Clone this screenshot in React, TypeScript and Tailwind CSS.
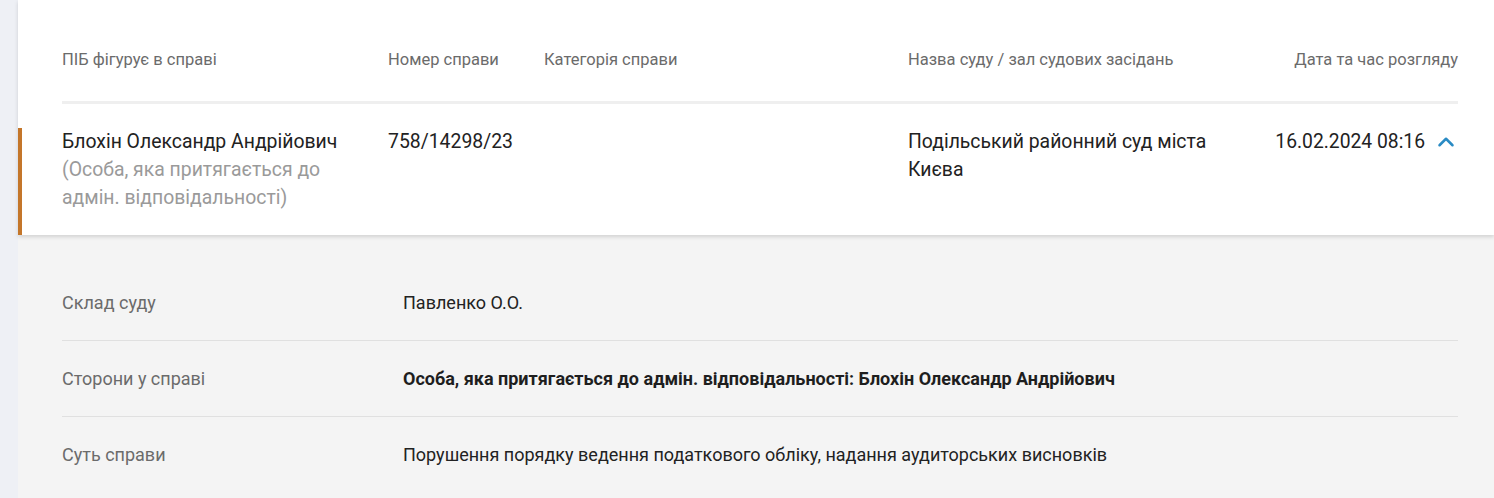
import { ChevronUp } from "lucide-react";

const columns = [
	{ label: "ПІБ фігурує в справі", className: "w-[326px]" },
	{ label: "Номер справи", className: "w-[156px]" },
	{ label: "Категорія справи", className: "w-[364px]" },
	{ label: "Назва суду / зал судових засідань", className: "flex-1" },
];

const details = [
	{ label: "Склад суду", value: "Павленко О.О.", bold: false },
	{
		label: "Сторони у справі",
		value: "Особа, яка притягається до адмін. відповідальності: Блохін Олександр Андрійович",
		bold: true,
	},
	{
		label: "Суть справи",
		value: "Порушення порядку ведення податкового обліку, надання аудиторських висновків",
		bold: false,
	},
];

export default function App() {
	return (
		<div className="flex min-h-[498px] w-full bg-[#eef0f5] font-['Roboto',sans-serif]">
			<div className="w-[18px] shrink-0" />
			<main className="flex flex-1 flex-col bg-[#f4f4f4]">
				<section className="relative z-10 bg-white shadow-[0_2px_4px_rgba(0,0,0,0.14)]">
					<div className="pl-[44px] pr-[36px]">
						<div className="flex items-center pt-[50px] pb-[31px] text-[16.5px] leading-5 text-[#6b6b6b]">
							{columns.map((col) => (
								<div key={col.label} className={col.className}>
									{col.label}
								</div>
							))}
							<div className="text-right">Дата та час розгляду</div>
						</div>
						<div className="h-[3px] bg-[#efefef]" />
					</div>
					<div className="mt-[24px] flex border-l-4 border-[#c4762a] pb-[23px] pl-[40px] pr-[35px] text-[19.4px] leading-[28px] text-[#222]">
						<div className="w-[326px]">
							<div>Блохін Олександр Андрійович</div>
							<div className="max-w-[290px] text-[#9a9a9a]">
								(Особа, яка притягається до адмін. відповідальності)
							</div>
						</div>
						<div className="w-[156px]">758/14298/23</div>
						<div className="w-[364px]" />
						<div className="flex-1">
							<div className="max-w-[320px]">Подільський районний суд міста Києва</div>
						</div>
						<div className="flex items-start gap-[8px]">
							<span className="text-[19.3px]">16.02.2024 08:16</span>
							<ChevronUp className="mt-[1px] h-[26px] w-[26px] text-[#2a8bc4]" strokeWidth={2.3} />
						</div>
					</div>
				</section>
				<section className="pt-[29px] pl-[44px] pr-[36px]">
					{details.map((row, i) => (
						<div
							key={row.label}
							className={`flex h-[76px] items-center text-[18px] ${i > 0 ? "border-t border-[#e0e0e0]" : ""}`}
						>
							<div className="w-[341px] text-[#6b6b6b]">{row.label}</div>
							<div className={row.bold ? "font-bold text-[#1e1e1e]" : "text-[#222]"}>{row.value}</div>
						</div>
					))}
				</section>
			</main>
		</div>
	);
}
